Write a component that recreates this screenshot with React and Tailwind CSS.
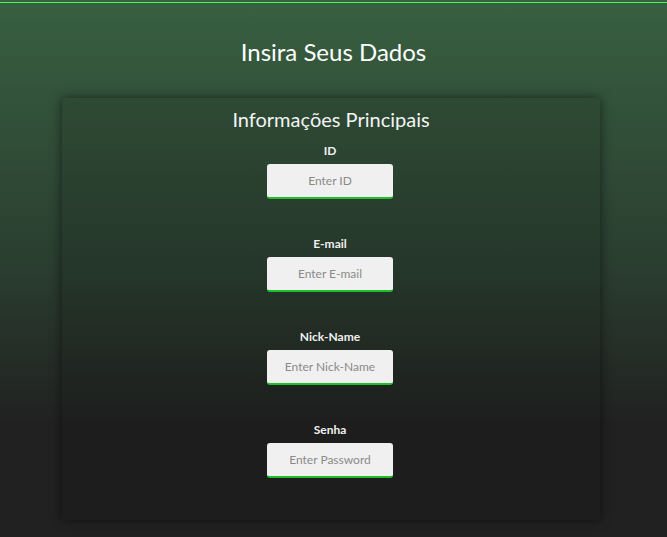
export default function App() {
  const fields = [
    { label: "ID", ph: "Enter ID", type: "text" },
    { label: "E-mail", ph: "Enter E-mail", type: "text" },
    { label: "Nick-Name", ph: "Enter Nick-Name", type: "text" },
    { label: "Senha", ph: "Enter Password", type: "password" },
  ];
  return (
    <div
      className="min-h-[537px] w-full bg-[linear-gradient(180deg,#386041_0%,#2a3d2f_50%,#212121_79%,#212121_100%)] pt-[2px] pb-[17px]"
      style={{ fontFamily: 'Lato, "Noto Sans", sans-serif' }}
    >
      <div className="h-px bg-[#4ef24e]" />
      <h1 className="mt-[34px] text-center text-[24px] leading-[30px] text-white">
        Insira Seus Dados
      </h1>
      <div className="mt-[31px] ml-[62px] w-[538px] rounded-[3px] bg-black/10 pt-[7px] pb-[42px] shadow-[0_0_12px_rgba(0,0,0,0.55)]">
        <h2 className="text-center text-[20px] leading-[28px] text-[#f4f4f4]">
          Informações Principais
        </h2>
        <div className="mt-[10px] flex flex-col items-center gap-[37px] pr-[2px]">
          {fields.map((f) => (
            <div key={f.label} className="flex flex-col items-center">
              <label className="text-[12px] font-bold leading-[16px] text-[#f0f0f0]">
                {f.label}
              </label>
              <input
                type={f.type}
                placeholder={f.ph}
                className="mt-[5px] h-[35px] w-[126px] rounded-[3px] border-b-2 border-[#1fbf2a] bg-[#f0f0f0] text-center text-[12px] text-[#555] outline-none placeholder:text-[#8a8a8a]"
              />
            </div>
          ))}
        </div>
      </div>
    </div>
  );
}
